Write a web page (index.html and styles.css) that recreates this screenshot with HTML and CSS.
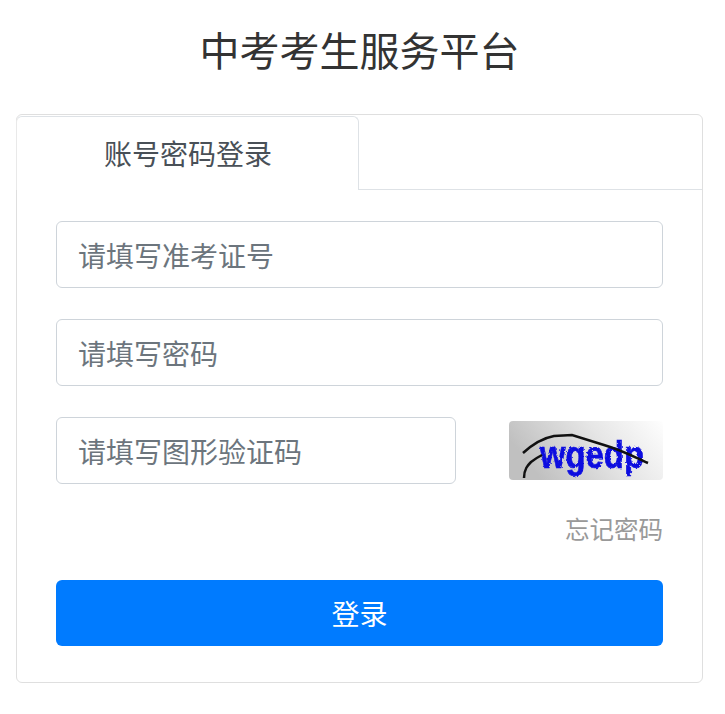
FILE: index.html
```html
<!DOCTYPE html>
<html lang="zh-CN">
<head>
<meta charset="utf-8">
<title>中考考生服务平台</title>
<link rel="stylesheet" href="styles.css">
</head>
<body>
<main class="page">
  <h1 class="title">中考考生服务平台</h1>
  <section class="card">
    <div class="tabs">
      <div class="tab">账号密码登录</div>
    </div>
    <form class="form">
      <input class="field" type="text" placeholder="请填写准考证号">
      <input class="field" type="password" placeholder="请填写密码">
      <div class="captcha-row">
        <input class="field captcha-field" type="text" placeholder="请填写图形验证码">
        <svg class="captcha" viewBox="0 0 154 59" role="img" aria-label="验证码">
          <defs>
            <linearGradient id="cg" x1="0" y1="0.3" x2="1" y2="0">
              <stop offset="0" stop-color="#c0c0c0"/>
              <stop offset="0.55" stop-color="#e6e6e6"/>
              <stop offset="1" stop-color="#fefefe"/>
            </linearGradient>
            <filter id="rough" x="-5%" y="-5%" width="110%" height="110%">
              <feTurbulence type="fractalNoise" baseFrequency="0.4" numOctaves="2" seed="4"/>
              <feDisplacementMap in="SourceGraphic" scale="3"/>
              <feGaussianBlur stdDeviation="0.25"/>
            </filter>
          </defs>
          <rect width="154" height="59" rx="4" fill="url(#cg)"/>
          <text class="captcha-text" x="31" y="47" textLength="104" lengthAdjust="spacingAndGlyphs" filter="url(#rough)">wgedp</text>
          <path class="captcha-line" d="M14 32C25 22 34 17 45 15L63 14L95 24C115 30 125 36 139 42"/>
          <path class="captcha-line" d="M15 57C15 48 19 44 22 41C26 38 29 36 33 34"/>
        </svg>
      </div>
      <div class="forgot-row"><a class="forgot" href="#">忘记密码</a></div>
      <button class="submit" type="button">登录</button>
    </form>
  </section>
</main>
</body>
</html>
```
FILE: styles.css
```css
* { box-sizing: border-box; }
html, body { margin: 0; padding: 0; background: #fff; }
body {
  font-family: "Noto Sans CJK SC", "Liberation Sans", sans-serif;
  color: #212529;
}
.page { width: 703px; padding: 0 0 0 16px; }
.title {
  margin: 0;
  padding-top: 19px;
  height: 114px;
  text-align: center;
  font-size: 40px;
  line-height: 60px;
  font-weight: 400;
  color: #333;
}
.card {
  height: 569px;
  border: 1px solid #dfdfdf;
  border-radius: 6px;
  padding-top: 1px;
}
.tabs {
  height: 74px;
  border-bottom: 1px solid #dee2e6;
}
.tab {
  width: 343px;
  height: 74px;
  background: #fff;
  border: 1px solid #dee2e6;
  border-bottom: 0;
  border-left-color: #e9e9e9;
  border-radius: 6px 6px 0 0;
  margin-left: -1px;
  padding-left: 87px;
  font-size: 28px;
  line-height: 72px;
  color: #495057;
}
.form {
  display: flex;
  flex-direction: column;
  padding: 31px 39px 0;
}
.field {
  display: block;
  width: 100%;
  height: 67px;
  padding: 0 21px;
  border: 1px solid #ced4da;
  border-radius: 6px;
  background: #fff;
  font: inherit;
  font-size: 28px;
  color: #495057;
  outline: none;
}
.field::placeholder { color: #6c757d; opacity: 1; }
.form > .field { margin-bottom: 31px; }
.captcha-row {
  display: flex;
  justify-content: space-between;
  align-items: flex-start;
  height: 67px;
}
.captcha-field { width: 400px; }
.captcha { display: block; width: 154px; height: 59px; margin-top: 4px; }
.captcha-text {
  font-family: "Liberation Sans", sans-serif;
  font-size: 38px;
  font-weight: 700;
  fill: #0f0fe0;
  stroke: #0f0fe0;
  stroke-width: 0.7;
}
.captcha-line { fill: none; stroke: #111; stroke-width: 2.5; }
.forgot-row {
  display: flex;
  justify-content: flex-end;
  height: 96px;
  padding-top: 26px;
}
.forgot {
  font-size: 24.5px;
  line-height: 38px;
  color: #999;
  text-decoration: none;
}
.submit {
  display: block;
  width: 100%;
  height: 66px;
  border: 0;
  border-radius: 6px;
  background: #007bff;
  color: #fff;
  font: inherit;
  font-size: 28px;
}
```
